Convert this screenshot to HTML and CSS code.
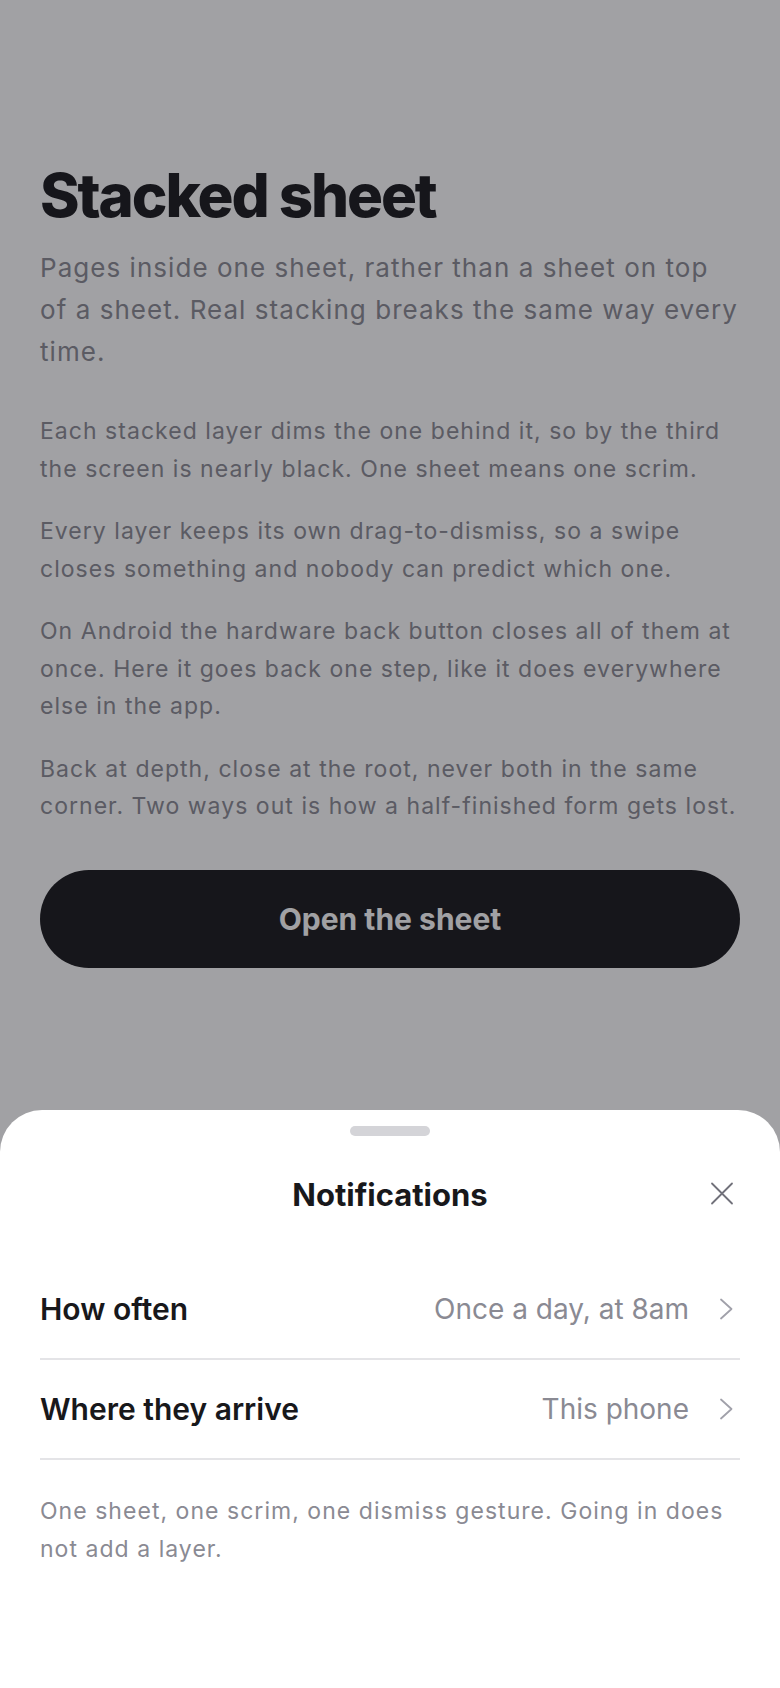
FILE: index.html
```html
<!DOCTYPE html>
<html lang="en">
<head>
<meta charset="utf-8">
<meta name="viewport" content="width=device-width, initial-scale=1">
<title>Stacked sheet</title>
<link rel="stylesheet" href="styles.css">
</head>
<body>
<main class="page">
  <h1 class="title">Stacked sheet</h1>
  <p class="lead">Pages inside one sheet, rather than a sheet on top of a sheet. Real stacking breaks the same way every time.</p>
  <p class="body">Each stacked layer dims the one behind it, so by the third the screen is nearly black. One sheet means one scrim.</p>
  <p class="body">Every layer keeps its own drag-to-dismiss, so a swipe closes something and nobody can predict which one.</p>
  <p class="body">On Android the hardware back button closes all of them at once. Here it goes back one step, like it does everywhere else in the app.</p>
  <p class="body">Back at depth, close at the root, never both in the same corner. Two ways out is how a half-finished form gets lost.</p>
  <button class="open-btn" type="button">Open the sheet</button>
</main>

<div class="scrim"></div>

<section class="sheet" aria-label="Notifications">
  <div class="grabber"><span class="grabber-bar"></span></div>
  <header class="sheet-head">
    <span class="head-spacer"></span>
    <h2 class="sheet-title">Notifications</h2>
    <button class="close-btn" type="button" aria-label="Close">
      <svg width="24" height="24" viewBox="0 0 24 24" fill="none" stroke="currentColor" stroke-width="1.8" stroke-linecap="round"><path d="M2 1.5 L22 21.5 M22 1.5 L2 21.5"/></svg>
    </button>
  </header>
  <ul class="rows">
    <li class="row">
      <span class="row-label">How often</span>
      <span class="row-right">
        <span class="row-value">Once a day, at 8am</span>
        <svg class="chev" width="24" height="24" viewBox="0 0 24 24" fill="none" stroke="currentColor" stroke-width="1.8" stroke-linecap="round" stroke-linejoin="round"><path d="M5 2.5 L15.5 12 L5 21.5"/></svg>
      </span>
    </li>
    <li class="row">
      <span class="row-label">Where they arrive</span>
      <span class="row-right">
        <span class="row-value">This phone</span>
        <svg class="chev" width="24" height="24" viewBox="0 0 24 24" fill="none" stroke="currentColor" stroke-width="1.8" stroke-linecap="round" stroke-linejoin="round"><path d="M5 2.5 L15.5 12 L5 21.5"/></svg>
      </span>
    </li>
  </ul>
  <p class="sheet-note">One sheet, one scrim, one dismiss gesture. Going in does not add a layer.</p>
</section>
</body>
</html>
```

FILE: styles.css
```css
* { box-sizing: border-box; }

html, body {
  margin: 0;
  padding: 0;
  background: #ffffff;
}

body {
  font-family: "Inter", "Noto Sans", "Liberation Sans", sans-serif;
  color: #18181b;
  min-height: 1688px;
}

.page {
  padding: 162px 40px 0;
  display: flex;
  flex-direction: column;
}

.title {
  margin: 0;
  font-size: 60px;
  line-height: 66px;
  font-weight: 800;
  letter-spacing: -0.035em;
  color: #18181b;
}

.lead {
  margin: 19px 0 40px;
  font-size: 26px;
  line-height: 42px;
  letter-spacing: 0.04em;
  color: #8a8a93;
}

.body {
  margin: 0 0 25px;
  font-size: 23px;
  line-height: 37.5px;
  letter-spacing: 0.045em;
  color: #8a8a93;
}

.body:last-of-type { margin-bottom: 0; }

.open-btn {
  margin-top: 44px;
  height: 98px;
  border: 0;
  border-radius: 49px;
  background: #18181b;
  color: #ffffff;
  font-family: inherit;
  font-size: 30px;
  font-weight: 700;
  letter-spacing: 0;
}

.scrim {
  position: fixed;
  inset: 0;
  background: rgba(20, 20, 28, 0.4);
}

.sheet {
  position: fixed;
  left: 0;
  right: 0;
  bottom: 0;
  height: 578px;
  background: #ffffff;
  border-radius: 42px 42px 0 0;
  display: flex;
  flex-direction: column;
}

.grabber {
  display: flex;
  justify-content: center;
  padding-top: 16px;
}

.grabber-bar {
  width: 80px;
  height: 10px;
  border-radius: 5px;
  background: #d4d4d8;
}

.sheet-head {
  margin-top: 24px;
  height: 68px;
  padding: 0 40px;
  display: grid;
  grid-template-columns: 1fr auto 1fr;
  align-items: center;
}

.sheet-title {
  margin: 0;
  font-size: 31px;
  font-weight: 700;
  color: #18181b;
}

.close-btn {
  justify-self: end;
  width: 36px;
  height: 36px;
  padding: 0;
  border: 0;
  background: none;
  color: #71717a;
  display: flex;
  align-items: center;
  justify-content: center;
}

.rows {
  list-style: none;
  margin: 32px 40px 0;
  padding: 0;
}

.row {
  height: 100px;
  border-bottom: 2px solid #e4e4e7;
  display: flex;
  align-items: center;
  justify-content: space-between;
}

.row-label {
  font-size: 30px;
  font-weight: 600;
  color: #18181b;
}

.row-right {
  display: flex;
  align-items: center;
  gap: 27px;
}

.row-value {
  font-size: 28px;
  color: #8a8a93;
}

.chev {
  color: #a1a1aa;
  display: block;
}

.sheet-note {
  margin: 33px 40px 0;
  font-size: 23px;
  line-height: 37.5px;
  letter-spacing: 0.045em;
  color: #8a8a93;
}
```
